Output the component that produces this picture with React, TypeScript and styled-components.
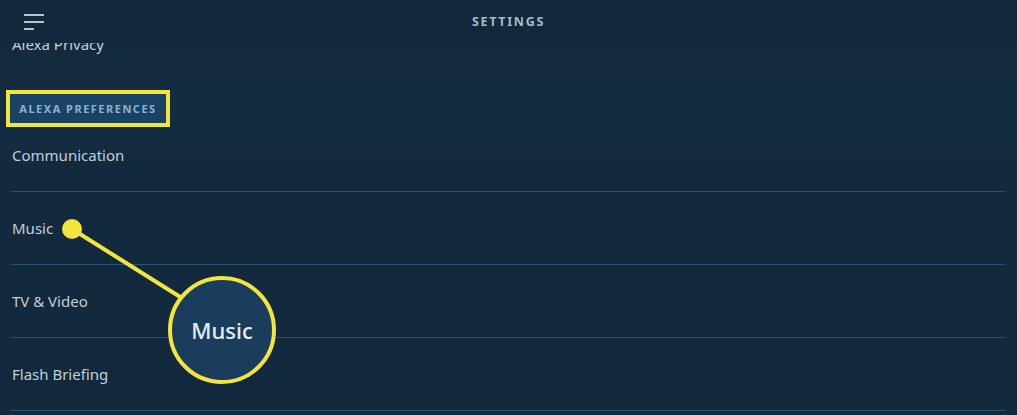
import React from 'react';
import styled, { createGlobalStyle } from 'styled-components';

const GlobalStyle = createGlobalStyle`
  html, body {
    margin: 0;
    padding: 0;
    background: #132a3e;
  }
  * {
    box-sizing: border-box;
  }
`;

const Screen = styled.div`
  position: relative;
  width: 1017px;
  height: 415px;
  overflow: hidden;
  background: linear-gradient(180deg, #12283c 0%, #142c42 28%, #132a3e 40%, #12293d 100%);
  font-family: 'Noto Sans', 'Open Sans', sans-serif;
`;

const TopBar = styled.header`
  position: relative;
  z-index: 2;
  height: 43px;
  display: grid;
  grid-template-columns: 60px 1fr 60px;
  align-items: center;
  background: #12283c;
`;

const MenuButton = styled.div`
  display: flex;
  flex-direction: column;
  gap: 5px;
  padding-left: 24px;
`;

const MenuLine = styled.span<{ $w: number }>`
  display: block;
  width: ${(p) => p.$w}px;
  height: 2px;
  background: #b6c4cf;
`;

const Title = styled.h1`
  margin: 0;
  text-align: center;
  font-size: 12.5px;
  font-weight: 700;
  letter-spacing: 1.7px;
  color: #a8bbca;
`;

const List = styled.main`
  margin-top: -13px;
`;

const Row = styled.div<{ $clipped?: boolean }>`
  height: ${(p) => (p.$clipped ? 28 : 73)}px;
  margin: 0 12px 0 11px;
  padding-left: 1px;
  display: flex;
  align-items: center;
  font-size: 15px;
  color: #c4cfd8;
  border-bottom: ${(p) => (p.$clipped ? 'none' : '1px solid #28556d')};
`;

const SectionHeading = styled.div`
  margin: 32px 0 -8px 6px;
  width: 164px;
  height: 37px;
  border: 4px solid #f3e53c;
  background: #1a4262;
  display: flex;
  align-items: center;
  justify-content: center;
  font-size: 11px;
  font-weight: 700;
  letter-spacing: 1.5px;
  color: #8db3d3;
  position: relative;
`;

const Callout = styled.svg`
  position: absolute;
  left: 0;
  top: 0;
  width: 1017px;
  height: 415px;
  pointer-events: none;
  z-index: 3;
`;

const Bubble = styled.div`
  position: absolute;
  left: 168px;
  top: 276px;
  width: 108px;
  height: 108px;
  border-radius: 50%;
  border: 4px solid #f3e53c;
  background: #1a3d5d;
  display: flex;
  align-items: center;
  justify-content: center;
  color: #e4edf3;
  font-size: 22px;
  font-weight: 500;
  z-index: 4;
`;

const rows = ['Communication', 'Music', 'TV & Video', 'Flash Briefing'];

export default function App() {
  return (
    <>
      <GlobalStyle />
      <Screen>
        <TopBar>
          <MenuButton>
            <MenuLine $w={20} />
            <MenuLine $w={20} />
            <MenuLine $w={10} />
          </MenuButton>
          <Title>SETTINGS</Title>
          <div />
        </TopBar>
        <List>
          <Row $clipped>Alexa Privacy</Row>
          <SectionHeading>ALEXA PREFERENCES</SectionHeading>
          {rows.map((r) => (
            <Row key={r}>{r}</Row>
          ))}
        </List>
        <Callout viewBox="0 0 1017 415">
          <line x1="72" y1="229" x2="185" y2="300" stroke="#f3e53c" strokeWidth="4" />
          <circle cx="72" cy="229" r="10" fill="#f3e53c" />
        </Callout>
        <Bubble>Music</Bubble>
      </Screen>
    </>
  );
}
